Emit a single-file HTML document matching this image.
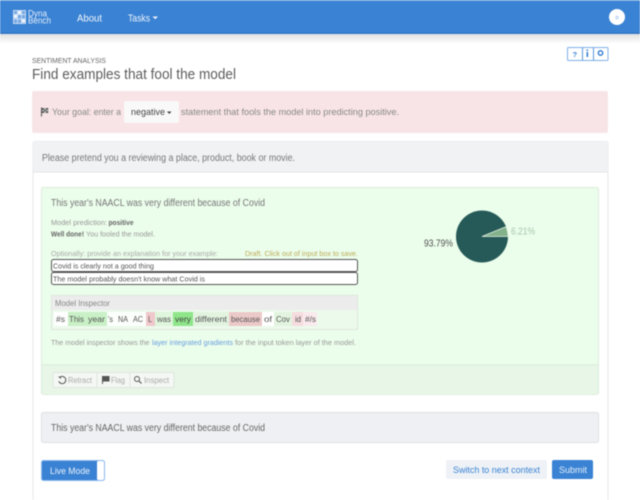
<!DOCTYPE html>
<html><head><meta charset="utf-8"><style>
html,body{margin:0;padding:0;background:#fff;width:640px;height:500px;overflow:hidden}
svg{display:block;filter:blur(.45px)}
text{font-family:"Liberation Sans","DejaVu Sans",sans-serif;fill:#666;white-space:pre}
</style></head><body>
<svg width="640" height="500" viewBox="0 0 640 500" xmlns="http://www.w3.org/2000/svg">
<defs><linearGradient id="sh" x1="0" y1="0" x2="0" y2="1"><stop offset="0" stop-color="#000" stop-opacity=".12"/><stop offset="1" stop-color="#000" stop-opacity="0"/></linearGradient></defs>
<!-- navbar -->
<rect x="0" y="34" width="640" height="10" fill="url(#sh)"/>
<rect x="0" y="0" width="640" height="34" fill="#3a82d3"/>
<rect x="0" y="0" width="640" height="1" fill="#6fa5e2"/>
<rect x="0" y="32.500" width="640" height="1" fill="#2f74c6"/>
<rect x="13" y="10" width="13" height="14" fill="#a9c9f0" opacity=".55"/>
<g fill="none" stroke="#e3eefb" stroke-width=".7"><rect x="13.500" y="10.500" width="12" height="13"/><path d="M17.500 10.500v13M21.500 10.500v13M13.500 14.500h12M13.500 19h12"/></g>
<g fill="#fff" opacity=".9"><rect x="18" y="11" width="3" height="3"/><rect x="14" y="15" width="3" height="3"/><rect x="22" y="19.500" width="3" height="3"/></g>
<text x="28" y="16.500" font-size="9" lengthAdjust="spacingAndGlyphs" textLength="19" style="fill:#e3eefb">Dyna</text>
<text x="28" y="23.500" font-size="9" lengthAdjust="spacingAndGlyphs" textLength="23" style="fill:#e3eefb">Bench</text>
<text x="77" y="21.500" font-size="10.500" lengthAdjust="spacingAndGlyphs" textLength="25" style="fill:#f1f6fd">About</text>
<text x="128" y="21.500" font-size="10.500" lengthAdjust="spacingAndGlyphs" textLength="22" style="fill:#f1f6fd">Tasks</text>
<path d="M152.500 16.500h5.500l-2.750 2.800z" fill="#f1f6fd"/>
<circle cx="617" cy="17" r="8" fill="#fff"/>
<text x="615.500" y="19" font-size="4.500" style="fill:#5f9be0">D</text>
<!-- help btns -->
<rect x="567.500" y="47.500" width="40.500" height="13" rx="1" fill="#fff" stroke="#80b0ea"/>
<path d="M582.500 47.500v13M593.500 47.500v13" stroke="#5a96e0"/>
<text x="572.500" y="57" font-size="7.500" font-weight="700" style="fill:#3a82d3">?</text>
<rect x="586.500" y="52" width="1.600" height="5" fill="#3a82d3"/><rect x="586.500" y="49.500" width="1.600" height="1.500" fill="#3a82d3"/>
<circle cx="600.500" cy="53" r="2.200" fill="none" stroke="#3a82d3" stroke-width="1.500"/>
<!-- heading -->
<text x="32" y="63" font-size="7.500" lengthAdjust="spacingAndGlyphs" textLength="74" style="fill:#666">SENTIMENT ANALYSIS</text>
<text x="32" y="79" font-size="15" lengthAdjust="spacingAndGlyphs" textLength="204" style="fill:#5c5c5c">Find examples that fool the model</text>
<!-- alert -->
<rect x="32" y="91" width="576" height="42" rx="2" fill="#f8e4e6"/>
<path d="M41.500 107.500v9" stroke="#555" stroke-width="1"/>
<rect x="42" y="108" width="6.500" height="5" fill="#bbb"/>
<path d="M42 108h2v1.700h-2zM46 108h2v1.700h-2zM44 109.700h2v1.600h-2zM42 111.300h2v1.700h-2zM46 111.300h2v1.700h-2z" fill="#555"/>
<text x="52" y="115" font-size="9.500" lengthAdjust="spacingAndGlyphs" textLength="69" style="fill:#888">Your goal: enter a</text>
<rect x="124" y="101" width="55" height="22" rx="2" fill="#f9f9f9"/>
<text x="131" y="115" font-size="9.500" lengthAdjust="spacingAndGlyphs" textLength="34" style="fill:#444">negative</text>
<path d="M167 111.500h4.500l-2.250 2.500z" fill="#444"/>
<text x="181" y="115" font-size="9.500" lengthAdjust="spacingAndGlyphs" textLength="218" style="fill:#888">statement that fools the model into predicting positive.</text>
<!-- outer card -->
<rect x="33" y="141.500" width="575" height="370" rx="2" fill="#fff" stroke="#e6e8ea"/>
<path d="M33 172V143.500q0-2 2-2H606q2 0 2 2V172z" fill="#f0f2f4"/>
<rect x="33" y="171.500" width="575" height="1" fill="#e2e4e6"/>
<text x="42" y="161" font-size="10" lengthAdjust="spacingAndGlyphs" textLength="253" style="fill:#777">Please pretend you a reviewing a place, product, book or movie.</text>
<!-- green card -->
<rect x="41.500" y="187.500" width="557" height="207" rx="2" fill="#ebfdeb" stroke="#dcebdc"/>
<rect x="42" y="365" width="556" height="29.500" fill="#e7f6e6"/>
<rect x="42" y="364.500" width="556" height="1" fill="#dcebdc"/>
<text x="51" y="206" font-size="10" lengthAdjust="spacingAndGlyphs" textLength="214" style="fill:#777">This year's NAACL was very different because of Covid</text>
<text x="51" y="225" font-size="7.500" lengthAdjust="spacingAndGlyphs" textLength="56" style="fill:#999">Model prediction:</text>
<text x="108.500" y="225" font-size="7.500" lengthAdjust="spacingAndGlyphs" textLength="25" font-weight="700" style="fill:#666">positive</text>
<text x="51" y="236.500" font-size="7.500" lengthAdjust="spacingAndGlyphs" textLength="33" font-weight="700" style="fill:#666">Well done!</text>
<text x="86" y="236.500" font-size="7.500" lengthAdjust="spacingAndGlyphs" textLength="69" style="fill:#999">You fooled the model.</text>
<text x="51" y="256" font-size="7.500" lengthAdjust="spacingAndGlyphs" textLength="167" style="fill:#aaa">Optionally: provide an explanation for your example:</text>
<text x="245" y="256" font-size="7.500" lengthAdjust="spacingAndGlyphs" textLength="113" style="fill:#bcab58">Draft. Click out of input box to save.</text>
<rect x="51.500" y="259.500" width="306" height="12" rx="2" fill="#fff" stroke="#555"/>
<rect x="51.500" y="272.500" width="306" height="12" rx="2" fill="#fff" stroke="#555"/>
<text x="53" y="268.500" font-size="7.500" lengthAdjust="spacingAndGlyphs" textLength="101" style="fill:#555">Covid is clearly not a good thing</text>
<text x="53" y="281.500" font-size="7.500" lengthAdjust="spacingAndGlyphs" textLength="152" style="fill:#555">The model probably doesn't know what Covid is</text>
<!-- inspector -->
<rect x="51.500" y="295.500" width="306" height="34" fill="#ecfaec" stroke="#dfe6df"/>
<rect x="52" y="296" width="305" height="14" fill="#ececec"/>
<text x="55" y="306" font-size="8" lengthAdjust="spacingAndGlyphs" textLength="55" style="fill:#888">Model Inspector</text>
<rect x="54" y="312" width="14" height="14" fill="#fff"/>
<rect x="68" y="312" width="39" height="14" fill="#c9f0c6"/>
<rect x="107" y="312" width="39" height="14" fill="#fbfefb"/>
<rect x="146" y="312" width="9" height="14" fill="#f0c8cc"/>
<rect x="155" y="312" width="18" height="14" fill="#dff5dc"/>
<rect x="173" y="312" width="20" height="14" fill="#8fe58a"/>
<rect x="193" y="312" width="36" height="14" fill="#e2f4e0"/>
<rect x="229" y="312" width="33" height="14" fill="#ecc9c9"/>
<rect x="262" y="312" width="12" height="14" fill="#fff"/>
<rect x="274" y="312" width="18" height="14" fill="#e2f4e0"/>
<rect x="292" y="312" width="11" height="14" fill="#f6dbdf"/>
<rect x="303" y="312" width="14" height="14" fill="#fbeaed"/>
<g font-size="8" lengthAdjust="spacingAndGlyphs">
<text x="56" y="322" lengthAdjust="spacingAndGlyphs" textLength="9" style="fill:#555">#s</text>
<text x="69" y="322" lengthAdjust="spacingAndGlyphs" textLength="15" style="fill:#555">This</text>
<text x="88" y="322" lengthAdjust="spacingAndGlyphs" textLength="17" style="fill:#555">year</text>
<text x="108" y="322" lengthAdjust="spacingAndGlyphs" textLength="5" style="fill:#555">'s</text>
<text x="118" y="322" lengthAdjust="spacingAndGlyphs" textLength="10" style="fill:#555">NA</text>
<text x="133" y="322" lengthAdjust="spacingAndGlyphs" textLength="10" style="fill:#555">AC</text>
<text x="148" y="322" lengthAdjust="spacingAndGlyphs" textLength="4" style="fill:#555">L</text>
<text x="157" y="322" lengthAdjust="spacingAndGlyphs" textLength="14" style="fill:#555">was</text>
<text x="175" y="322" lengthAdjust="spacingAndGlyphs" textLength="16" style="fill:#444">very</text>
<text x="195" y="322" lengthAdjust="spacingAndGlyphs" textLength="32" style="fill:#555">different</text>
<text x="231" y="322" lengthAdjust="spacingAndGlyphs" textLength="29" style="fill:#555">because</text>
<text x="264" y="322" lengthAdjust="spacingAndGlyphs" textLength="8" style="fill:#555">of</text>
<text x="276" y="322" lengthAdjust="spacingAndGlyphs" textLength="14" style="fill:#555">Cov</text>
<text x="295" y="322" lengthAdjust="spacingAndGlyphs" textLength="6" style="fill:#555">id</text>
<text x="305" y="322" lengthAdjust="spacingAndGlyphs" textLength="11" style="fill:#555">#/s</text>
</g>
<text x="51" y="345" font-size="7.500" lengthAdjust="spacingAndGlyphs" textLength="98.500" style="fill:#999">The model inspector shows the</text>
<text x="152" y="345" font-size="7.500" lengthAdjust="spacingAndGlyphs" textLength="81" style="fill:#6a9ee0">layer integrated gradients</text>
<text x="235" y="345" font-size="7.500" lengthAdjust="spacingAndGlyphs" textLength="121" style="fill:#999">for the input token layer of the model.</text>
<!-- action buttons -->
<rect x="53" y="372.500" width="121" height="15" rx="1.500" fill="#f4f7f4" stroke="#dfe6df"/>
<path d="M97 372.500v15M130 372.500v15" stroke="#dfe6df"/>
<path d="M60 377.200a3.600 3.600 0 1 1-1.200 4" fill="none" stroke="#555" stroke-width="1"/><path d="M58 376.500h3v2.500z" fill="#555"/>
<text x="68" y="383" font-size="8" lengthAdjust="spacingAndGlyphs" textLength="24" style="fill:#aaa">Retract</text>
<path d="M102 376h7.500v5.500h-6.500v2.500h-1z" fill="#555"/>
<text x="111" y="383" font-size="8" lengthAdjust="spacingAndGlyphs" textLength="14" style="fill:#aaa">Flag</text>
<circle cx="137" cy="379" r="2.500" fill="none" stroke="#555" stroke-width="1"/><path d="M139 381l2.500 2.500" stroke="#555" stroke-width="1.200"/>
<text x="144" y="383" font-size="8" lengthAdjust="spacingAndGlyphs" textLength="25" style="fill:#aaa">Inspect</text>
<!-- pie -->
<circle cx="482" cy="236.500" r="26" fill="#265a58"/>
<path d="M482 236.500L508 236.500A26 26 0 0 0 506 226.600Z" fill="#82b18c" stroke="#e6f2e2" stroke-width=".8"/>
<text x="511" y="234.500" font-size="10" lengthAdjust="spacingAndGlyphs" textLength="24" style="fill:#a8c8ac">6.21%</text>
<text x="424" y="246.500" font-size="10" lengthAdjust="spacingAndGlyphs" textLength="29" style="fill:#555">93.79%</text>
<!-- grey box -->
<rect x="41.500" y="412.500" width="557" height="30" rx="2" fill="#eef0f3" stroke="#dee0e2"/>
<text x="51" y="431" font-size="10" lengthAdjust="spacingAndGlyphs" textLength="214" style="fill:#666">This year's NAACL was very different because of Covid</text>
<!-- bottom -->
<rect x="41.500" y="460.500" width="63" height="20" rx="2" fill="#3a82d3" stroke="#8ab8ec"/>
<rect x="97" y="461" width="7" height="19" rx="1.500" fill="#fff"/>
<text x="50" y="474" font-size="9.500" lengthAdjust="spacingAndGlyphs" textLength="40" style="fill:#e8f1fb">Live Mode</text>
<rect x="446" y="460" width="101" height="19" rx="2" fill="#eef2f6"/>
<text x="453" y="473" font-size="9.500" lengthAdjust="spacingAndGlyphs" textLength="87" style="fill:#3a82d3">Switch to next context</text>
<rect x="552" y="460" width="41" height="19" rx="2" fill="#3a82d3"/>
<text x="559" y="473" font-size="9.500" lengthAdjust="spacingAndGlyphs" textLength="28" style="fill:#e8f1fb">Submit</text>
</svg>
</body></html>
